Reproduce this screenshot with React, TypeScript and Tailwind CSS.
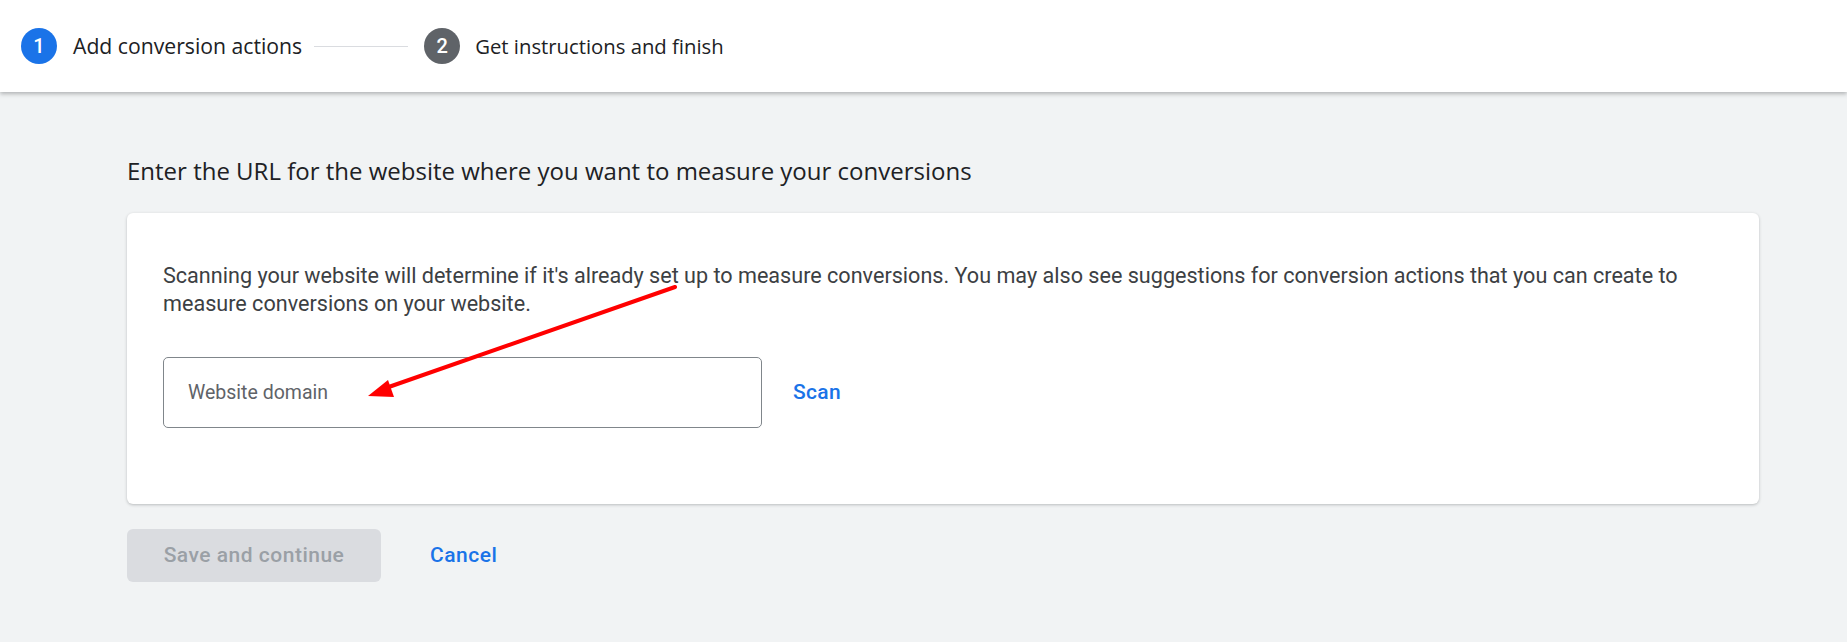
import React from 'react';

const StepCircle: React.FC<{ n: number; active?: boolean }> = ({ n, active }) => (
    <span
        className={`flex h-[36px] w-[36px] shrink-0 items-center justify-center rounded-full font-['Roboto',sans-serif] text-[20px] font-medium text-white ${
            active ? 'bg-[#1a73e8]' : 'bg-[#5f6368]'
        }`}
    >
        {n}
    </span>
);

export default function App() {
    return (
        <div className="h-[642px] w-full overflow-hidden bg-[#f1f3f4] font-['Roboto',sans-serif]">
            {/* Stepper header */}
            <header className="relative z-10 flex h-[92px] items-center bg-white pl-[21px] font-['Open_Sans',sans-serif] shadow-[0_2px_4px_rgba(60,64,67,0.35)]">
                <StepCircle n={1} active />
                <span className="ml-[16px] text-[21.2px] text-[#202124]">Add conversion actions</span>
                <span className="ml-[12px] mr-[16px] h-px w-[94px] bg-[#dadce0]" />
                <StepCircle n={2} />
                <span className="ml-[15px] text-[20.3px] text-[#202124]">Get instructions and finish</span>
            </header>

            <main className="pl-[127px] pr-[88px]">
                <h1 className="mt-[63px] font-['Open_Sans',sans-serif] text-[24px] leading-[32px] text-[#202124]">
                    Enter the URL for the website where you want to measure your conversions
                </h1>

                {/* Card */}
                <section className="relative mt-[26px] rounded-[6px] bg-white px-[36px] pb-[76px] pt-[49px] shadow-[0_1px_3px_rgba(60,64,67,0.3)]">
                    <p className="text-[21.6px] leading-[28px] text-[#3c4043]">
                        Scanning your website will determine if it's already set up to measure conversions. You may also see
                        suggestions for conversion actions that you can create to measure conversions on your website.
                    </p>
                    <div className="mt-[39px] flex items-center">
                        <div className="flex h-[71px] w-[599px] items-center rounded-[5px] border border-[#80868b] pl-[24px] text-[19.5px] text-[#5f6368]">
                            Website domain
                        </div>
                        <button className="ml-[31px] text-[21px] font-medium tracking-[0.3px] text-[#1a73e8]">Scan</button>
                    </div>

                    {/* Annotation arrow */}
                    <svg
                        className="pointer-events-none absolute left-0 top-0"
                        width="600"
                        height="220"
                        viewBox="0 0 600 220"
                    >
                        <line x1="548" y1="74" x2="256" y2="176" stroke="#ff0000" strokeWidth="4" strokeLinecap="round" />
                        <polygon points="241,183 261,167 267,184" fill="#ff0000" />
                    </svg>
                </section>

                {/* Actions */}
                <div className="mt-[25px] flex items-center">
                    <button className="h-[53px] w-[254px] rounded-[6px] bg-[#dadce0] text-[21px] font-medium tracking-[0.5px] text-[#9aa0a6]">
                        Save and continue
                    </button>
                    <button className="ml-[33px] px-[16px] text-[21px] font-medium tracking-[0.5px] text-[#1a73e8]">Cancel</button>
                </div>
            </main>
        </div>
    );
}
